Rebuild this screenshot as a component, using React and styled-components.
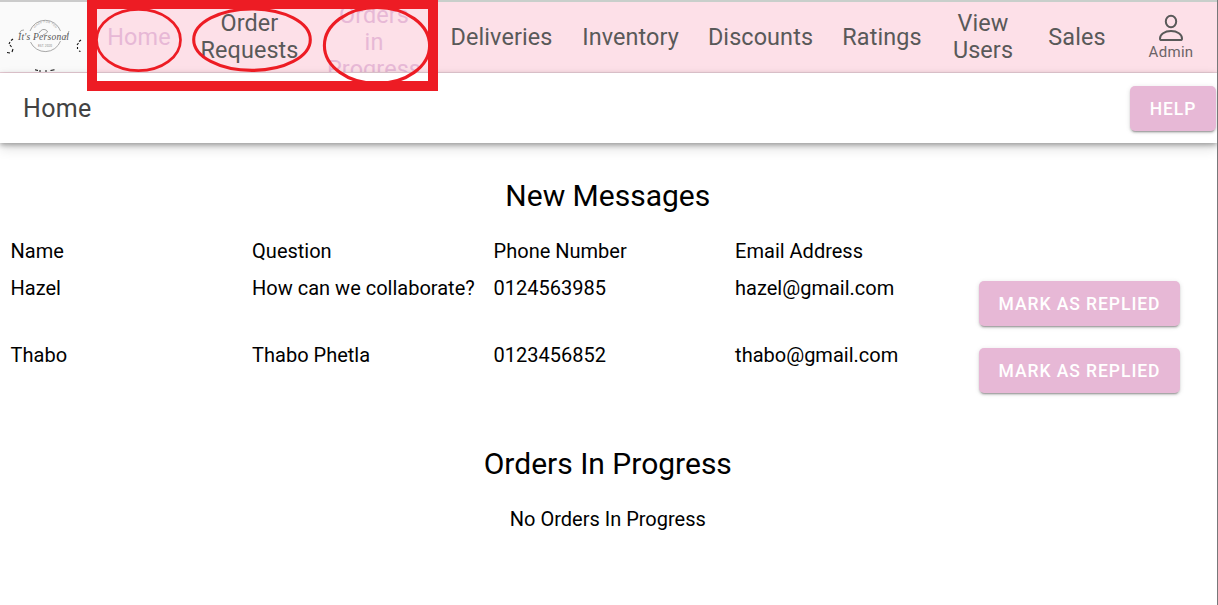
import React from 'react';
import styled, { createGlobalStyle } from 'styled-components';

const GlobalStyle = createGlobalStyle`
  * { box-sizing: border-box; }
  body {
    margin: 0;
    background: #fff;
    color: #000;
    font-family: Roboto, sans-serif;
    font-size: 20px;
    line-height: 1.2;
  }
`;

const Page = styled.div`
  position: relative;
  width: 1218px;
  height: 605px;
  overflow: hidden;
  border-right: 1px solid #77787a;
`;

const TabBar = styled.nav`
  display: flex;
  height: 73px;
  background: #fde0e8;
  border-top: 2px solid #c8cfcb;
  border-bottom: 1px solid #ecd0d9;
`;

const LogoBox = styled.div`
  flex: 0 0 87px;
  height: 70px;
  margin-right: -1px;
  background: #fafafa;
  box-shadow: 0 -2px 0 #cbcbcb;
`;

const Tab = styled.a`
  display: flex;
  flex: 0 0 ${(p) => p.$width}px;
  flex-direction: column;
  align-items: center;
  justify-content: safe center;
  height: 70px;
  overflow: hidden;
  color: ${(p) => (p.$active ? '#e7b8d6' : '#595959')};
  font-size: 23.4px;
  line-height: 27px;
  letter-spacing: 0.1px;
  text-align: center;
`;

const TabLine = styled.span`
  flex: none;
  white-space: nowrap;
`;

const AdminLabel = styled.span`
  margin-top: 1px;
  font-size: 15px;
  line-height: 18px;
  letter-spacing: 0.3px;
  color: #6b6467;
`;

const Header = styled.header`
  position: relative;
  display: flex;
  align-items: center;
  justify-content: space-between;
  height: 70px;
  padding: 0 1px 0 23px;
  background: #fff;
  box-shadow: 0 2px 5px rgba(0, 0, 0, 0.32), 0 5px 12px rgba(0, 0, 0, 0.14);
`;

const Title = styled.h1`
  margin: 0;
  padding-top: 2px;
  color: #424242;
  font-size: 25px;
  font-weight: 400;
  letter-spacing: 0.0125em;
`;

const Button = styled.button`
  width: ${(p) => p.$width}px;
  height: 45px;
  padding: ${(p) => p.$drop || 0}px 0 0;
  border: 0;
  border-radius: 5px;
  background: #e7b8d6;
  color: #fff;
  font: 500 17.5px Roboto, sans-serif;
  letter-spacing: 0.054em;
  text-transform: uppercase;
  box-shadow: 0 3px 1px -2px rgba(0, 0, 0, 0.2), 0 2px 2px rgba(0, 0, 0, 0.14),
    0 1px 5px rgba(0, 0, 0, 0.12);
`;

const Content = styled.main`
  padding: 35px 6px 0 4.6px;
`;

const Heading = styled.h2`
  margin: 0;
  font-size: 30px;
  line-height: 36px;
  font-weight: 400;
  text-align: center;
`;

const MessageTable = styled.div`
  padding-top: 19px;
`;

const Row = styled.div`
  display: grid;
  grid-template-columns: repeat(5, 241.5px);
  height: ${(p) => (p.$header ? 37 : 67)}px;
`;

const Cell = styled.div`
  padding: 6px 0 0 6px;
  line-height: 24px;
  white-space: nowrap;
`;

const ActionCell = styled.div`
  padding: 11px 0 0 8.4px;
`;

const OrdersSection = styled.section`
  padding-top: 42px;
`;

const EmptyText = styled.p`
  margin: 25px 0 0;
  line-height: 24px;
  text-align: center;
`;

const Markup = styled.svg`
  position: absolute;
  top: 0;
  left: 87px;
  pointer-events: none;
`;

const tabs = [
  { lines: ['Home'], width: 106, active: true },
  { lines: ['Order', 'Requests'], width: 115 },
  { lines: ['Orders', 'in', 'Progress'], width: 134, active: true },
  { lines: ['Deliveries'], width: 121 },
  { lines: ['Inventory'], width: 137 },
  { lines: ['Discounts'], width: 123 },
  { lines: ['Ratings'], width: 120 },
  { lines: ['View', 'Users'], width: 82 },
  { lines: ['Sales'], width: 106 },
];

const messages = [
  ['Hazel', 'How can we collaborate?', '0124563985', 'hazel@gmail.com'],
  ['Thabo', 'Thabo Phetla', '0123456852', 'thabo@gmail.com'],
];

const Logo = () => (
  <svg width="87" height="70" viewBox="0 2 87 70" fill="none">
    <path d="M30 31A16.2 16.2 0 0 1 60.5 31M30.5 42A16.2 16.2 0 0 0 60.5 41" stroke="#929292" strokeWidth="0.8" />
    <defs>
      <path id="arc" d="M33.5 31A12.5 12.5 0 0 1 57 31" />
    </defs>
    <text fontFamily="Roboto" fontSize="3" fill="#999" letterSpacing="0.3">
      <textPath href="#arc" startOffset="3">MADE FOR YOU</textPath>
    </text>
    <text x="18" y="39.5" fontFamily="Liberation Serif" fontStyle="italic" fontSize="9.5" fill="#555" textLength="51" lengthAdjust="spacing">It's Personal</text>
    <path d="M19 34q2-5 5-4M39 33q3-5 7-3t-3 5M65 38q3-3 4-7" stroke="#666" strokeWidth="0.6" />
    <text x="38" y="47" fontFamily="Roboto" fontSize="3.2" fill="#888" textLength="14">EST. 2020</text>
    <path d="M13 39l-2 1.5M10 42l-1 2M10 45l1.5 2M13 49l-1 3M10 53l-3-.5M81 40l-2 1.5M78.5 43l-1.5 2M77.5 47v2M79 51l1.5.5M35 69.7l3 .8M39 71h2M45 71h2M50.5 70.5l4-.8" stroke="#111" strokeWidth="1.1" />
  </svg>
);

const PersonIcon = () => (
  <svg width="26" height="28" viewBox="0 0 26 28" fill="none" stroke="#595959" strokeWidth="2">
    <ellipse cx="13" cy="7.5" rx="5.2" ry="5.8" />
    <path d="M13 17C6.6 17 2 20.4 2 24.4C2 25.5 2.6 26 3.6 26H22.4C23.4 26 24 25.5 24 24.4C24 20.4 19.4 17 13 17Z" />
  </svg>
);

export default function App() {
  return (
    <Page>
      <GlobalStyle />
      <TabBar>
        <LogoBox><Logo /></LogoBox>
        {tabs.map((tab) => (
          <Tab key={tab.lines.join(' ')} $width={tab.width} $active={tab.active}>
            {tab.lines.map((line) => <TabLine key={line}>{line}</TabLine>)}
          </Tab>
        ))}
        <Tab $width={82}>
          <PersonIcon />
          <AdminLabel>Admin</AdminLabel>
        </Tab>
      </TabBar>
      <Header>
        <Title>Home</Title>
        <Button $width={86} $drop={1}>Help</Button>
      </Header>
      <Content>
        <Heading>New Messages</Heading>
        <MessageTable>
          <Row $header>
            {['Name', 'Question', 'Phone Number', 'Email Address'].map((name) => (
              <Cell key={name}>{name}</Cell>
            ))}
          </Row>
          {messages.map((message) => (
            <Row key={message[0]}>
              {message.map((value) => <Cell key={value}>{value}</Cell>)}
              <ActionCell><Button $width={201}>Mark as replied</Button></ActionCell>
            </Row>
          ))}
        </MessageTable>
        <OrdersSection>
          <Heading>Orders In Progress</Heading>
          <EmptyText>No Orders In Progress</EmptyText>
        </OrdersSection>
      </Content>
      <Markup width="351" height="91" viewBox="87 0 351 91" fill="none" stroke="#ed1c24">
        <ellipse cx="138.5" cy="40" rx="42" ry="30.7" strokeWidth="2.7" />
        <ellipse cx="252" cy="39.7" rx="58.3" ry="30.7" strokeWidth="3.1" />
        <ellipse cx="377" cy="45.5" rx="52.6" ry="38" strokeWidth="3.1" />
        <path fill="#ed1c24" stroke="none" fillRule="evenodd" d="M87 0H438V91H87ZM97 9V81H428V9Z" />
      </Markup>
    </Page>
  );
}
